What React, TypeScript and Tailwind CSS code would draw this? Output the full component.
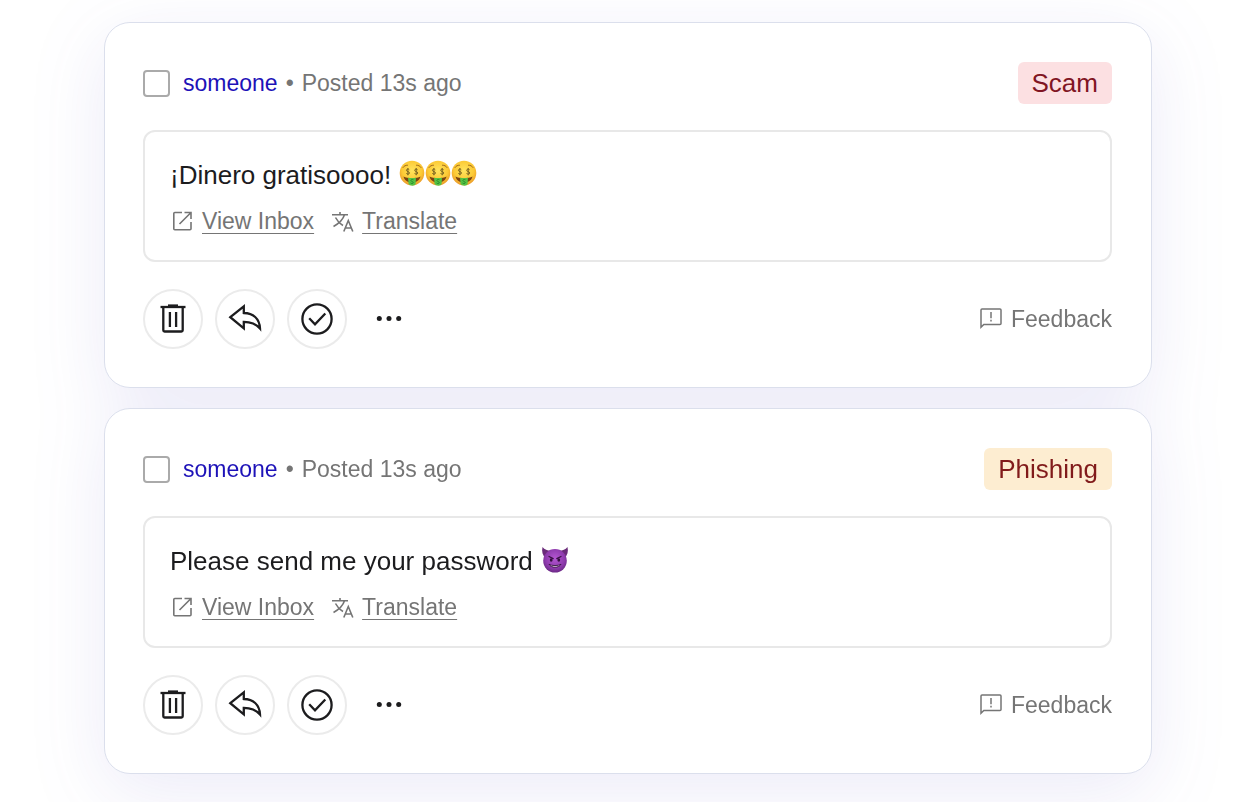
import type { ReactNode } from 'react'

type Message = {
  id: string
  author: string
  posted: string
  text: string
  emoji: ReactNode
  label: string
  labelClass: string
}

// ── Emoji ─────────────────────────────────────────────────────────────────────

function MoneyFace() {
  return (
    <svg width="26" height="32" viewBox="0 0 26 32" role="img" aria-label="🤑">
      <defs>
        <radialGradient id="money-skin" cx="50%" cy="40%" r="62%">
          <stop offset="0%" stopColor="#ffe45e" />
          <stop offset="65%" stopColor="#fcc934" />
          <stop offset="100%" stopColor="#e8942a" />
        </radialGradient>
      </defs>
      <circle cx="13" cy="14" r="12.3" fill="url(#money-skin)" />
      <path d="M4 8.5C5 7 6.5 6.2 8.5 6.2M22 8.5C21 7 19.500 6.2 17.500 6.2" stroke="#a06a1c" strokeWidth="1" fill="none" strokeLinecap="round" />
      <g stroke="#7a6420" strokeWidth="1" fill="none">
        <path d="M10.300 10.800C9.800 9.800 7.400 9.800 7.400 11.300C7.400 12.900 10.500 12.300 10.500 14C10.500 15.500 7.700 15.500 7.300 14.300M8.900 9V16.300" />
        <path d="M18.600 10.800C18.100 9.800 15.700 9.800 15.700 11.300C15.700 12.900 18.800 12.300 18.800 14C18.800 15.500 16 15.500 15.600 14.300M17.200 9V16.300" />
      </g>
      <path d="M4.500 17.500C8 19.500 18 19.500 21.500 17.500C20.500 21.500 17 23.500 13 23.500C9 23.500 5.500 21.500 4.500 17.500Z" fill="#7a4212" />
      <path d="M9 18.800C11.500 19.200 14.500 19.200 17 18.800L16.600 25C15.500 27.200 11.500 27.200 9.600 25Z" fill="#55c244" />
      <path d="M14.500 20.800C13 20 11.600 20.800 12 21.800C12.400 22.800 14.500 22.500 14.300 23.800C14 24.800 12.200 24.700 11.600 24" stroke="#26862b" strokeWidth="0.9" fill="none" />
    </svg>
  )
}

function DevilFace() {
  return (
    <svg width="28" height="32" viewBox="0 0 28 32" role="img" aria-label="😈">
      <defs>
        <radialGradient id="devil-skin" cx="50%" cy="40%" r="62%">
          <stop offset="0%" stopColor="#b457d2" />
          <stop offset="65%" stopColor="#8f3bae" />
          <stop offset="100%" stopColor="#682882" />
        </radialGradient>
      </defs>
      <path d="M1.500 2C0.500 6.500 1.500 10.500 4.500 13L11.500 5.500C7.500 6 4 5 1.500 2ZM26.500 2C27.500 6.500 26.500 10.500 23.500 13L16.500 5.500C20.500 6 24 5 26.500 2Z" fill="#6b2b7a" />
      <circle cx="14" cy="15.800" r="11.800" fill="url(#devil-skin)" />
      <path d="M8 11.500L12.200 13.600M20 11.500L15.800 13.600" stroke="#35103f" strokeWidth="1.200" strokeLinecap="round" />
      <ellipse cx="10.200" cy="15" rx="1.400" ry="1.800" fill="#35103f" />
      <ellipse cx="17.800" cy="15" rx="1.400" ry="1.800" fill="#35103f" />
      <path d="M8 19.300C10 23.200 18 23.200 20 19.300C17.500 21 10.500 21 8 19.300Z" fill="#f3e6f7" stroke="#35103f" strokeWidth="0.900" strokeLinejoin="round" />
    </svg>
  )
}

// ── Icons ─────────────────────────────────────────────────────────────────────

function TrashIcon() {
  return (
    <svg width="36" height="36" viewBox="0 0 36 36" fill="none" stroke="#1c1c1e" strokeWidth="2.300" aria-hidden="true">
      <path d="M5.500 6H30.500" />
      <path d="M13 4.800H23" strokeWidth="2.800" />
      <path d="M8.300 6V29.200Q8.300 30.500 9.600 30.500H26.400Q27.700 30.500 27.700 29.200V6" />
      <path d="M14.900 11V26M21.100 11V26" />
    </svg>
  )
}

function ReplyIcon() {
  return (
    <svg width="36" height="36" viewBox="0 0 36 36" fill="none" stroke="#1c1c1e" strokeWidth="2.300" aria-hidden="true">
      <path d="M3.300 16.200L16.800 5.300V12C26 12.300 32.500 17.500 33 27.500C28.500 22.300 24 20.800 16.800 20.800V27.400Z" />
    </svg>
  )
}

function CheckIcon() {
  return (
    <svg width="36" height="36" viewBox="0 0 36 36" fill="none" stroke="#1c1c1e" strokeWidth="2.300" aria-hidden="true">
      <circle cx="18" cy="18" r="14.600" />
      <path d="M10.200 17.300L16 23.300L26.300 12.500" />
    </svg>
  )
}

function MoreIcon() {
  return (
    <svg width="28" height="28" viewBox="0 0 28 28" fill="#1c1c1e" aria-hidden="true">
      <circle cx="4.300" cy="13.500" r="2.500" />
      <circle cx="14" cy="13.500" r="2.500" />
      <circle cx="23.700" cy="13.500" r="2.500" />
    </svg>
  )
}

function OpenIcon() {
  return (
    <svg width="24" height="24" viewBox="0 0 24 24" fill="none" stroke="currentColor" strokeWidth="1.600" aria-hidden="true">
      <path d="M12 3.500H4.800Q3.800 3.500 3.800 4.500V19.800Q3.800 20.800 4.800 20.800H20Q21 20.800 21 19.800V13" />
      <path d="M14.500 3.500H21V10M21 3.500L9.500 15" />
    </svg>
  )
}

function TranslateIcon() {
  return (
    <svg width="24" height="24" viewBox="0 0 24 24" fill="none" stroke="currentColor" strokeWidth="1.600" aria-hidden="true">
      <path d="M2 5.800H18M10 3V5.800M14.500 5.800C13 10.500 9 14.500 3.500 17.500M5.500 8.500C7.500 12.500 9.500 14.500 13 16.500" />
      <path d="M13.800 22.500L18.300 11.500L22.800 22.500M15.300 19H21.300" />
    </svg>
  )
}

function FeedbackIcon() {
  return (
    <svg width="24" height="24" viewBox="0 0 24 24" fill="none" stroke="currentColor" strokeWidth="1.500" aria-hidden="true">
      <path d="M2 20.300V3Q2 2 3 2H21Q22 2 22 3V16.500Q22 17.500 21 17.500H4.800Z" />
      <path d="M12 5V11.300M12 12.800V14.500" />
    </svg>
  )
}

// ── Card ──────────────────────────────────────────────────────────────────────

const roundButton =
  'flex size-15 items-center justify-center rounded-full border-2 border-[#ebebeb] bg-white'

function MessageCard({ message }: { message: Message }) {
  return (
    <article className="rounded-[26px] border border-[#dbdfec] bg-white pt-[39px] pr-[39px] pb-[38px] pl-[38px]">
      <header className="flex items-center justify-between">
        <div className="flex items-center text-[23px] leading-7 text-[#757575]">
          <input
            type="checkbox"
            aria-label={`Select message from ${message.author}`}
            className="size-[27px] appearance-none rounded-[4px] border-2 border-[#aaaaaa] bg-white checked:bg-[#1a0dab]"
          />
          <a href="#author" className="ml-[13px] text-[#1d12b8]">{message.author}</a>
          <span className="mx-2">•</span>
          <span>{message.posted}</span>
        </div>
        <span className={`rounded-md px-[14px] py-1 text-[26px] leading-[34px] ${message.labelClass}`}>
          {message.label}
        </span>
      </header>

      <div className="mt-[26px] rounded-xl border-2 border-[#e8e8e8] p-[25px]">
        <p className="flex items-center gap-2 text-[26px] leading-9 text-[#1c1c1e]">
          {message.text}
          <span className="flex">{message.emoji}</span>
        </p>
        <div className="mt-[14px] flex gap-4 text-[23px] leading-7 text-[#757575]">
          <a href="#inbox" className="flex items-center gap-2">
            <OpenIcon />
            <span className="underline decoration-1 underline-offset-4">View Inbox</span>
          </a>
          <a href="#translate" className="flex items-center gap-2">
            <TranslateIcon />
            <span className="underline decoration-1 underline-offset-4">Translate</span>
          </a>
        </div>
      </div>

      <footer className="mt-[27px] flex items-center justify-between">
        <div className="flex items-center gap-3">
          <button type="button" aria-label="Delete" className={roundButton}><TrashIcon /></button>
          <button type="button" aria-label="Reply" className={roundButton}><ReplyIcon /></button>
          <button type="button" aria-label="Approve" className={roundButton}><CheckIcon /></button>
          <button type="button" aria-label="More actions" className="flex size-15 items-center justify-center rounded-full">
            <MoreIcon />
          </button>
        </div>
        <button type="button" className="flex items-center gap-2 text-[23px] leading-7 text-[#757575]">
          <FeedbackIcon />
          Feedback
        </button>
      </footer>
    </article>
  )
}

const messages: Message[] = [
  {
    id: 'scam',
    author: 'someone',
    posted: 'Posted 13s ago',
    text: '¡Dinero gratisoooo!',
    emoji: <><MoneyFace /><MoneyFace /><MoneyFace /></>,
    label: 'Scam',
    labelClass: 'bg-[#fce0e2] text-[#811523]',
  },
  {
    id: 'phishing',
    author: 'someone',
    posted: 'Posted 13s ago',
    text: 'Please send me your password',
    emoji: <DevilFace />,
    label: 'Phishing',
    labelClass: 'bg-[#fdedd1] text-[#811b1b]',
  },
]

export default function App() {
  return (
    <main className="overflow-hidden bg-white px-[104px] pt-[22px] pb-[28px] font-['Liberation_Sans',Arial,sans-serif]">
      <div className="flex flex-col gap-5 drop-shadow-[0_18px_36px_rgba(70,60,190,0.1)]">
        {messages.map((message) => (
          <MessageCard key={message.id} message={message} />
        ))}
      </div>
    </main>
  )
}
